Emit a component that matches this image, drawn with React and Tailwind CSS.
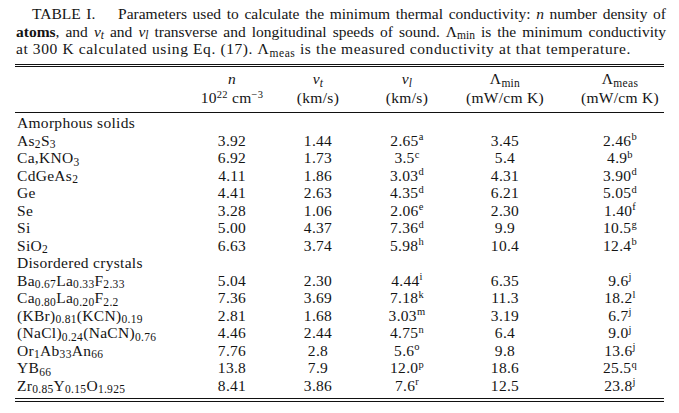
const sub = (t) => <sub className="text-[11.5px]">{t}</sub>
const sup = (t) => <sup className="text-[10.5px]">{t}</sup>

const rows = [
  { label: 'Amorphous solids', group: true },
  { f: <>As{sub('2')}S{sub('3')}</>, v: ['3.92', '1.44', ['2.65', 'a'], '3.45', ['2.46', 'b']] },
  { f: <>Ca,KNO{sub('3')}</>, v: ['6.92', '1.73', ['3.5', 'c'], '5.4', ['4.9', 'b']] },
  { f: <>CdGeAs{sub('2')}</>, v: ['4.11', '1.86', ['3.03', 'd'], '4.31', ['3.90', 'd']] },
  { f: <>Ge</>, v: ['4.41', '2.63', ['4.35', 'd'], '6.21', ['5.05', 'd']] },
  { f: <>Se</>, v: ['3.28', '1.06', ['2.06', 'e'], '2.30', ['1.40', 'f']] },
  { f: <>Si</>, v: ['5.00', '4.37', ['7.36', 'd'], '9.9', ['10.5', 'g']] },
  { f: <>SiO{sub('2')}</>, v: ['6.63', '3.74', ['5.98', 'h'], '10.4', ['12.4', 'b']] },
  { label: 'Disordered crystals', group: true },
  { f: <>Ba{sub('0.67')}La{sub('0.33')}F{sub('2.33')}</>, v: ['5.04', '2.30', ['4.44', 'i'], '6.35', ['9.6', 'j']] },
  { f: <>Ca{sub('0.80')}La{sub('0.20')}F{sub('2.2')}</>, v: ['7.36', '3.69', ['7.18', 'k'], '11.3', ['18.2', 'l']] },
  { f: <>(KBr){sub('0.81')}(KCN){sub('0.19')}</>, v: ['2.81', '1.68', ['3.03', 'm'], '3.19', ['6.7', 'j']] },
  { f: <>(NaCl){sub('0.24')}(NaCN){sub('0.76')}</>, v: ['4.46', '2.44', ['4.75', 'n'], '6.4', ['9.0', 'j']] },
  { f: <>Or{sub('1')}Ab{sub('33')}An{sub('66')}</>, v: ['7.76', '2.8', ['5.6', 'o'], '9.8', ['13.6', 'j']] },
  { f: <>YB{sub('66')}</>, v: ['13.8', '7.9', ['12.0', 'p'], '18.6', ['25.5', 'q']] },
  { f: <>Zr{sub('0.85')}Y{sub('0.15')}O{sub('1.925')}</>, v: ['8.41', '3.86', ['7.6', 'r'], '12.5', ['23.8', 'j']] },
]

const cols = 'grid grid-cols-[175px_84px_88px_90px_124px_88px]'

function Cell({ value, last }) {
  const body = Array.isArray(value) ? <>{value[0]}{sup(value[1])}</> : value
  return <div className={`text-center ${last ? 'pr-[18px]' : ''}`}>{body}</div>
}

export default function App() {
  return (
    <div className="w-[679px] h-[413px] bg-white text-[#141414] overflow-hidden" style={{ fontFamily: '"Liberation Serif", serif' }}>
      {/* caption: three fixed lines, first two justified */}
      <div className="pl-[16px] pr-[13px] pt-[5px] text-[15.5px] leading-[17.5px]">
        <div className="text-justify [text-align-last:justify] pl-[16px]">
          TABLE I.&nbsp;&nbsp;&nbsp; Parameters used to calculate the minimum thermal conductivity: <i>n</i> number density of
        </div>
        <div className="text-justify [text-align-last:justify]">
          <b>atoms</b>, and <i>v</i>{sub(<i>t</i>)} and <i>v</i>{sub(<i>l</i>)} transverse and longitudinal speeds of sound. Λ{sub('min')} is the minimum conductivity
        </div>
        <div className="tracking-[0.6px]">
          at 300 K calculated using Eq. (17). Λ{sub('meas')} is the measured conductivity at that temperature.
        </div>
      </div>

      <div className="ml-[15px] w-[649px] mt-[6px] text-[15.5px] tracking-[0.3px]">
        <div className="border-t-[1.5px] border-[#111]" />
        <div className="border-t-[1.5px] border-[#111] mt-[1.5px]" />

        <div className={`${cols} pt-[2px] pb-[5px] leading-[19px]`}>
          <div />
          <div className="text-center">
            <div><i>n</i></div>
            <div>10{sup('22')} cm{sup('−3')}</div>
          </div>
          <div className="text-center">
            <div><i>v</i>{sub(<i>t</i>)}</div>
            <div>(km/s)</div>
          </div>
          <div className="text-center">
            <div><i>v</i>{sub(<i>l</i>)}</div>
            <div>(km/s)</div>
          </div>
          <div className="text-center pr-[18px]">
            <div>Λ{sub('min')}</div>
            <div>(mW/cm K)</div>
          </div>
          <div className="text-center">
            <div>Λ{sub('meas')}</div>
            <div>(mW/cm K)</div>
          </div>
        </div>

        <div className="border-t-[1.5px] border-[#111]" />

        <div className="pt-[1px] leading-[17.5px]">
          {rows.map((r, i) =>
            r.group ? (
              <div key={i} className="pl-[2px] h-[17.5px]">{r.label}</div>
            ) : (
              <div key={i} className={`${cols} h-[17.5px]`}>
                <div className="pl-[2px]">{r.f}</div>
                {r.v.map((v, j) => (
                  <Cell key={j} value={v} last={j === 3} />
                ))}
              </div>
            )
          )}
        </div>

        <div className="border-t-[1.5px] border-[#111] mt-[4px]" />
        <div className="border-t-[1.5px] border-[#111] mt-[1.5px]" />
      </div>
    </div>
  )
}
